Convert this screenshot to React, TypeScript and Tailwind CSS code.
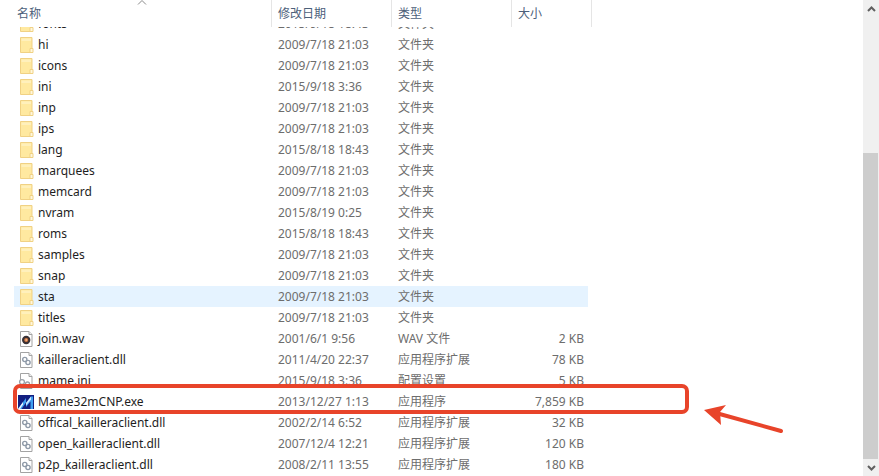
const folders = [
  ["fonts", "2015/9/18 18:43"],
  ["hi", "2009/7/18 21:03"],
  ["icons", "2009/7/18 21:03"],
  ["ini", "2015/9/18 3:36"],
  ["inp", "2009/7/18 21:03"],
  ["ips", "2009/7/18 21:03"],
  ["lang", "2015/8/18 18:43"],
  ["marquees", "2009/7/18 21:03"],
  ["memcard", "2009/7/18 21:03"],
  ["nvram", "2015/8/19 0:25"],
  ["roms", "2015/8/18 18:43"],
  ["samples", "2009/7/18 21:03"],
  ["snap", "2009/7/18 21:03"],
  ["sta", "2009/7/18 21:03"],
  ["titles", "2009/7/18 21:03"],
];

const files = [
  { name: "join.wav", date: "2001/6/1 9:56", type: "WAV 文件", size: "2 KB", icon: "wav" },
  { name: "kailleraclient.dll", date: "2011/4/20 22:37", type: "应用程序扩展", size: "78 KB", icon: "dll" },
  { name: "mame.ini", date: "2015/9/18 3:36", type: "配置设置", size: "5 KB", icon: "ini" },
  { name: "Mame32mCNP.exe", date: "2013/12/27 1:13", type: "应用程序", size: "7,859 KB", icon: "exe" },
  { name: "offical_kailleraclient.dll", date: "2002/2/14 6:52", type: "应用程序扩展", size: "32 KB", icon: "dll" },
  { name: "open_kailleraclient.dll", date: "2007/12/4 12:21", type: "应用程序扩展", size: "120 KB", icon: "dll" },
  { name: "p2p_kailleraclient.dll", date: "2008/2/11 13:55", type: "应用程序扩展", size: "180 KB", icon: "dll" },
];

const FolderIcon = () => (
  <svg width="16" height="16" viewBox="0 0 16 16">
    <path d="M2.5 0.5H14V15.5H2.5Z" fill="#ffe9a0" stroke="#f0d184" />
    <path d="M3.5 1.5H13V4H3.5Z" fill="#fff0bc" />
    <path d="M12 11.5H15V15.5H12Z" fill="#fff7dc" stroke="#f0d184" />
  </svg>
);

const PageIcon = ({ icon }: { icon: string }) => (
  <svg width="16" height="16" viewBox="0 0 16 16">
    <path d="M2.5 0.5H11L14 3.5V15.5H2.5Z" fill="#fff" stroke="#a3a3a3" />
    <path d="M11 0.5V3.5H14" fill="#efefef" stroke="#a3a3a3" />
    {icon === "wav" && (
      <>
        <circle cx="8.2" cy="9" r="4.2" fill="#3a3236" />
        <circle cx="8.2" cy="9" r="2" fill="#d9793f" />
        <circle cx="8.2" cy="9" r="0.7" fill="#f3e3d0" />
      </>
    )}
    {icon === "dll" && (
      <g fill="none" stroke="#8f9aa8" strokeWidth="1.4">
        <circle cx="6.8" cy="7.5" r="2.1" />
        <circle cx="10" cy="10.5" r="2.1" />
      </g>
    )}
    {icon === "ini" && (
      <g fill="#fff" stroke="#9aa0a8" strokeWidth="1.3">
        <circle cx="4" cy="9" r="2.4" />
        <circle cx="9.5" cy="11" r="2" />
      </g>
    )}
  </svg>
);

const ExeIcon = () => (
  <svg width="16" height="14" viewBox="0 0 16 14">
    <rect width="16" height="14" fill="#131f80" />
    <path d="M0 14L8 3V8L13 1.5H15V14H12.5V6.5L8 12V7.5L3.5 14Z" fill="#3f9ff0" />
    <path d="M0 14L5 7V9.5L2 14Z" fill="#e6f4ff" />
    <path d="M8 8L13 1.5V4.5L8 10.5Z" fill="#cfe9ff" />
  </svg>
);

const Row = ({ name, date, type, size, icon, active }: { name: string; date: string; type: string; size?: string; icon: string; active?: boolean }) => (
  <div className={`ml-[14px] flex h-[21px] w-[574px] shrink-0 items-center ${active ? "bg-[#e5f3ff]" : ""}`}>
    <div className="flex w-[257px] shrink-0 items-center pl-[4px]">
      <span className="flex w-[20px] shrink-0">
        {icon === "folder" ? <FolderIcon /> : icon === "exe" ? <ExeIcon /> : <PageIcon icon={icon} />}
      </span>
      <span className="text-[#1e1e1e]">{name}</span>
    </div>
    <div className="w-[120px] shrink-0 pl-[7px] text-[#6d6d6d]">{date}</div>
    <div className="w-[120px] shrink-0 pl-[7px] text-[#6d6d6d]">{type}</div>
    <div className="w-[77px] shrink-0 pr-[4px] text-right text-[#6d6d6d]">{size}</div>
  </div>
);

export default function App() {
  return (
    <div className="relative flex h-[476px] w-[879px] overflow-hidden bg-white font-['Noto_Sans','Noto_Sans_CJK_SC',sans-serif] text-[12px]">
      <div className="flex min-w-0 flex-1 flex-col">
        <div className="relative flex h-[27px] shrink-0 bg-white text-[#4c607a]">
          <div className="w-[272px] border-r border-[#e5e5e5] pl-[17px] pt-[5px]">名称</div>
          <div className="w-[120px] border-r border-[#e5e5e5] pl-[6px] pt-[5px]">修改日期</div>
          <div className="w-[120px] border-r border-[#e5e5e5] pl-[6px] pt-[5px]">类型</div>
          <div className="w-[80px] border-r border-[#e5e5e5] pl-[6px] pt-[5px]">大小</div>
          <svg className="absolute left-[137px] top-0" width="10" height="5" viewBox="0 0 10 5">
            <path d="M1 4.5L5 0.5L9 4.5" fill="none" stroke="#8a8a8a" />
          </svg>
        </div>
        <div className="min-h-0 flex-1 overflow-hidden">
          <div className="mt-[-14px] flex flex-col">
            {folders.map(([name, date]) => (
              <Row key={name} name={name} date={date} type="文件夹" icon="folder" active={name === "sta"} />
            ))}
            {files.map((f) => (
              <Row key={f.name} {...f} />
            ))}
          </div>
        </div>
      </div>
      <div className="flex w-[16px] shrink-0 flex-col bg-[#f0f0f0]">
        <div className="flex h-[18px] items-center justify-center">
          <svg width="9" height="6" viewBox="0 0 9 6">
            <path d="M1 5L4.5 1.5L8 5" fill="none" stroke="#606060" strokeWidth="2" />
          </svg>
        </div>
        <div className="mr-[1px] mt-[135px] flex-1 bg-[#cdcdcd]" />
        <div className="flex h-[17px] items-center justify-center">
          <svg width="9" height="6" viewBox="0 0 9 6">
            <path d="M1 1L4.5 4.5L8 1" fill="none" stroke="#606060" strokeWidth="2" />
          </svg>
        </div>
      </div>
      <div className="absolute left-[13px] top-[384px] h-[30px] w-[676px] rounded-[7px] border-[4px] border-[#e8442a]" />
      <svg className="absolute left-[700px] top-[400px]" width="90" height="36" viewBox="700 400 90 36">
        <path d="M704 410L726 405L720 412L721 425Z" fill="#e8442a" />
        <path d="M716 413L781 431" stroke="#e8442a" strokeWidth="4" strokeLinecap="round" />
      </svg>
    </div>
  );
}
